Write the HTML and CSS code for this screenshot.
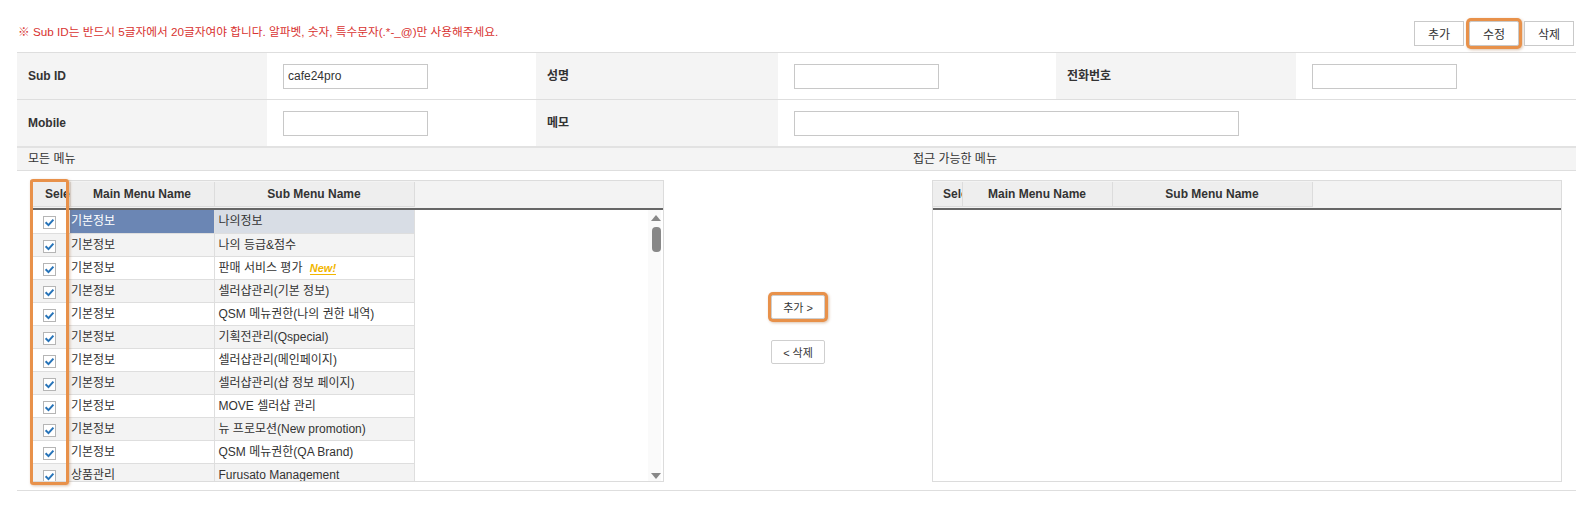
FILE: index.html
```html
<!DOCTYPE html>
<html lang="ko">
<head>
    <meta charset="UTF-8">
    <title>Sub ID 관리</title>
    <link rel="stylesheet" href="styles.css">
</head>
<body>
<div class="page">
    <div class="topbar">
        <p class="notice">※ Sub ID는 반드시 5글자에서 20글자여야 합니다. 알파벳, 숫자, 특수문자(.*-_@)만 사용해주세요.</p>
        <div class="actions">
            <button class="btn">추가</button>
            <button class="btn btn--mark">수정</button>
            <button class="btn">삭제</button>
        </div>
    </div>

    <table class="form">
        <colgroup>
            <col style="width:250px"><col style="width:269px"><col style="width:242px">
            <col style="width:278px"><col style="width:240px"><col style="width:280px">
        </colgroup>
        <tr>
            <th>Sub ID</th>
            <td><input class="field" type="text" value="cafe24pro"></td>
            <th>성명</th>
            <td><input class="field" type="text"></td>
            <th>전화번호</th>
            <td><input class="field" type="text"></td>
        </tr>
        <tr>
            <th>Mobile</th>
            <td><input class="field" type="text"></td>
            <th>메모</th>
            <td colspan="3"><input class="field field--wide" type="text"></td>
        </tr>
    </table>

    <div class="menu-bar">
        <span class="menu-bar__left">모든 메뉴</span>
        <span class="menu-bar__right">접근 가능한 메뉴</span>
    </div>

    <div class="menu-area">
        <div class="grid grid--all">
            <div class="grid__head">
                <table class="cols-all">
                    <colgroup><col style="width:39px"><col style="width:144px"><col style="width:200px"></colgroup>
                    <tr>
                        <th class="sel-th"><div>Select</div></th>
                        <th>Main Menu Name</th>
                        <th>Sub Menu Name</th>
                    </tr>
                </table>
            </div>
            <div class="grid__body">
                <table class="rows cols-all">
                    <colgroup><col style="width:39px"><col style="width:144px"><col style="width:200px"></colgroup>
                    <tr class="is-selected"><td class="c-sel"><svg class="chk" viewBox="0 0 13 13"><rect x=".5" y=".5" width="12" height="12" fill="#fff" stroke="#b5b5b5"/><path d="M2.6 6.2l2.9 2.9 4.9-5.4" fill="none" stroke="#2673b8" stroke-width="2"/></svg></td><td class="c-main">기본정보</td><td class="c-sub">나의정보</td></tr>
                    <tr><td class="c-sel"><svg class="chk" viewBox="0 0 13 13"><rect x=".5" y=".5" width="12" height="12" fill="#fff" stroke="#b5b5b5"/><path d="M2.6 6.2l2.9 2.9 4.9-5.4" fill="none" stroke="#2673b8" stroke-width="2"/></svg></td><td class="c-main">기본정보</td><td class="c-sub">나의 등급&amp;점수</td></tr>
                    <tr><td class="c-sel"><svg class="chk" viewBox="0 0 13 13"><rect x=".5" y=".5" width="12" height="12" fill="#fff" stroke="#b5b5b5"/><path d="M2.6 6.2l2.9 2.9 4.9-5.4" fill="none" stroke="#2673b8" stroke-width="2"/></svg></td><td class="c-main">기본정보</td><td class="c-sub">판매 서비스 평가 <em class="new">New!</em></td></tr>
                    <tr><td class="c-sel"><svg class="chk" viewBox="0 0 13 13"><rect x=".5" y=".5" width="12" height="12" fill="#fff" stroke="#b5b5b5"/><path d="M2.6 6.2l2.9 2.9 4.9-5.4" fill="none" stroke="#2673b8" stroke-width="2"/></svg></td><td class="c-main">기본정보</td><td class="c-sub">셀러샵관리(기본 정보)</td></tr>
                    <tr><td class="c-sel"><svg class="chk" viewBox="0 0 13 13"><rect x=".5" y=".5" width="12" height="12" fill="#fff" stroke="#b5b5b5"/><path d="M2.6 6.2l2.9 2.9 4.9-5.4" fill="none" stroke="#2673b8" stroke-width="2"/></svg></td><td class="c-main">기본정보</td><td class="c-sub">QSM 메뉴권한(나의 권한 내역)</td></tr>
                    <tr><td class="c-sel"><svg class="chk" viewBox="0 0 13 13"><rect x=".5" y=".5" width="12" height="12" fill="#fff" stroke="#b5b5b5"/><path d="M2.6 6.2l2.9 2.9 4.9-5.4" fill="none" stroke="#2673b8" stroke-width="2"/></svg></td><td class="c-main">기본정보</td><td class="c-sub">기획전관리(Qspecial)</td></tr>
                    <tr><td class="c-sel"><svg class="chk" viewBox="0 0 13 13"><rect x=".5" y=".5" width="12" height="12" fill="#fff" stroke="#b5b5b5"/><path d="M2.6 6.2l2.9 2.9 4.9-5.4" fill="none" stroke="#2673b8" stroke-width="2"/></svg></td><td class="c-main">기본정보</td><td class="c-sub">셀러샵관리(메인페이지)</td></tr>
                    <tr><td class="c-sel"><svg class="chk" viewBox="0 0 13 13"><rect x=".5" y=".5" width="12" height="12" fill="#fff" stroke="#b5b5b5"/><path d="M2.6 6.2l2.9 2.9 4.9-5.4" fill="none" stroke="#2673b8" stroke-width="2"/></svg></td><td class="c-main">기본정보</td><td class="c-sub">셀러샵관리(샵 정보 페이지)</td></tr>
                    <tr><td class="c-sel"><svg class="chk" viewBox="0 0 13 13"><rect x=".5" y=".5" width="12" height="12" fill="#fff" stroke="#b5b5b5"/><path d="M2.6 6.2l2.9 2.9 4.9-5.4" fill="none" stroke="#2673b8" stroke-width="2"/></svg></td><td class="c-main">기본정보</td><td class="c-sub">MOVE 셀러샵 관리</td></tr>
                    <tr><td class="c-sel"><svg class="chk" viewBox="0 0 13 13"><rect x=".5" y=".5" width="12" height="12" fill="#fff" stroke="#b5b5b5"/><path d="M2.6 6.2l2.9 2.9 4.9-5.4" fill="none" stroke="#2673b8" stroke-width="2"/></svg></td><td class="c-main">기본정보</td><td class="c-sub">뉴 프로모션(New promotion)</td></tr>
                    <tr><td class="c-sel"><svg class="chk" viewBox="0 0 13 13"><rect x=".5" y=".5" width="12" height="12" fill="#fff" stroke="#b5b5b5"/><path d="M2.6 6.2l2.9 2.9 4.9-5.4" fill="none" stroke="#2673b8" stroke-width="2"/></svg></td><td class="c-main">기본정보</td><td class="c-sub">QSM 메뉴권한(QA Brand)</td></tr>
                    <tr><td class="c-sel"><svg class="chk" viewBox="0 0 13 13"><rect x=".5" y=".5" width="12" height="12" fill="#fff" stroke="#b5b5b5"/><path d="M2.6 6.2l2.9 2.9 4.9-5.4" fill="none" stroke="#2673b8" stroke-width="2"/></svg></td><td class="c-main">상품관리</td><td class="c-sub">Furusato Management</td></tr>
                </table>
                <div class="scrollbar">
                    <span class="scrollbar__up"></span>
                    <span class="scrollbar__thumb"></span>
                    <span class="scrollbar__down"></span>
                </div>
            </div>
            <div class="sel-mark"></div>
        </div>

        <div class="mover">
            <button class="btn btn--small btn--mark">추가 &gt;</button>
            <button class="btn btn--small">&lt; 삭제</button>
        </div>

        <div class="grid grid--access">
            <div class="grid__head">
                <table class="cols-access">
                    <colgroup><col style="width:29px"><col style="width:150px"><col style="width:200px"></colgroup>
                    <tr>
                        <th class="sel-th sel-th--narrow"><div>Select</div></th>
                        <th>Main Menu Name</th>
                        <th>Sub Menu Name</th>
                    </tr>
                </table>
            </div>
            <div class="grid__body"></div>
        </div>
    </div>
</div>
</body>
</html>
```

FILE: styles.css
```css
body {
    margin:0;
    font:12px/1.5 "Liberation Sans", "Noto Sans CJK KR", sans-serif;
    color:#333;
    background:#fff;
}
.page {
    width:1559px;
    padding-left:17px;
}

/* top */
.topbar {
    display:flex;
    justify-content:space-between;
    align-items:center;
    height:52px;
    padding-top:14px;
    box-sizing:border-box;
}
.notice {
    margin:0 0 3px 1px;
    font-size:11.7px;
    color:#d83331;
}
.actions {
    display:flex;
    gap:5px;
    margin-right:2px;
}
.btn {
    height:25px;
    width:50px;
    padding:0;
    border:1px solid #c9c9c9;
    background:#fff;
    color:#333;
    font:12px "Liberation Sans", "Noto Sans CJK KR", sans-serif;
}
.btn--mark {
    border-radius:2px;
    box-shadow:0 0 0 3px #e8914a, 1px 1px 3px 3px rgba(150,80,20,.35);
}
.btn--small {
    width:54px;
    height:24px;
    font-size:11px;
    border-color:#cfcfcf;
    border-radius:2px;
}

/* form */
.form {
    width:1559px;
    border-collapse:collapse;
    table-layout:fixed;
    border-top:1px solid #dedede;
}
.form tr {
    border-bottom:1px solid #dedede;
}
.form tr:last-child {
    border-bottom:2px solid #e2e2e2;
}
.form th {
    height:46px;
    padding:0 0 0 11px;
    background:#f4f4f4;
    text-align:left;
    font-weight:bold;
    color:#333;
}
.form td {
    padding:0 0 0 16px;
}
.field {
    box-sizing:border-box;
    width:145px;
    height:25px;
    border:1px solid #c8c8c8;
    padding:0 4px;
    font:12px "Liberation Sans", "Noto Sans CJK KR", sans-serif;
    color:#333;
}
.field--wide {
    width:445px;
}

.menu-bar {
    display:flex;
    height:22px;
    line-height:22px;
    background:#f4f4f4;
    border-bottom:1px solid #dedede;
}
.menu-bar__left {
    width:885px;
    padding-left:11px;
}

/* grids */
.menu-area {
    display:flex;
    align-items:flex-start;
    height:320px;
    padding:9px 0 0 13px;
    box-sizing:border-box;
    border-bottom:1px solid #dedede;
}
.grid {
    position:relative;
    box-sizing:border-box;
    height:302px;
    border:1px solid #dcdcdc;
    background:#fff;
}
.grid--all {
    width:634px;
}
.grid--access {
    width:630px;
}
.grid__head {
    box-sizing:border-box;
    height:29px;
    padding-top:1px;
    background:#f3f3f3;
    border-bottom:2px solid #666;
}
.grid__head table,
.rows {
    border-collapse:collapse;
    table-layout:fixed;
}
.cols-all {
    width:383px;
}
.cols-access {
    width:379px;
}
.grid__head th {
    height:24px;
    padding:0;
    border:1px solid #dcdcdc;
    border-top:0;
    background:#eeeeee;
    font-weight:bold;
    color:#333;
    text-align:center;
    overflow:hidden;
}
.grid__head th:first-child {
    border-left:0;
}
.sel-th div {
    overflow:hidden;
    white-space:nowrap;
    text-align:left;
    padding-left:14px;
}
.sel-th--narrow div {
    padding-left:10px;
}
.grid__body {
    display:flex;
    justify-content:space-between;
    height:271px;
    overflow:hidden;
}
.rows tr {
    height:23px;
}
.rows td {
    padding:0;
    border-bottom:1px solid #dedede;
    white-space:nowrap;
    overflow:hidden;
}
.rows tr:nth-child(even) td {
    background:#f3f3f3;
}
.rows .c-main {
    padding-left:1px;
    border-right:1px solid #dedede;
}
.rows .c-sub {
    padding-left:4px;
    border-right:1px solid #dedede;
}
.rows tr.is-selected .c-main {
    background:#6b86b4;
    color:#fff;
}
.rows tr.is-selected .c-sub {
    background:#d8dde5;
}
.chk {
    display:block;
    width:13px;
    height:13px;
    margin:3px 0 0 12px;
}
.new {
    color:#f2b600;
    font-weight:bold;
    font-size:11px;
    border-bottom:1px solid #f2b600;
    margin-left:4px;
}

.scrollbar {
    position:relative;
    width:13px;
    margin-right:2px;
    background:#fafafa;
}
.scrollbar__up,
.scrollbar__down {
    position:absolute;
    left:3px;
    width:0;
    height:0;
    border-left:5px solid transparent;
    border-right:5px solid transparent;
}
.scrollbar__up {
    top:5px;
    border-bottom:6px solid #888;
}
.scrollbar__down {
    bottom:2px;
    border-top:6px solid #888;
}
.scrollbar__thumb {
    position:absolute;
    top:17px;
    left:4px;
    width:9px;
    height:25px;
    border-radius:4px;
    background:#888;
}

/* annotation frame over the select column */
.sel-mark {
    position:absolute;
    left:-1px;
    top:-2px;
    width:33px;
    height:300px;
    border:3px solid #e8914a;
    border-radius:3px;
    box-shadow:1px 1px 3px rgba(150,80,20,.35);
}

.mover {
    display:flex;
    flex-direction:column;
    align-items:center;
    gap:21px;
    width:268px;
    padding-top:115px;
}
```
